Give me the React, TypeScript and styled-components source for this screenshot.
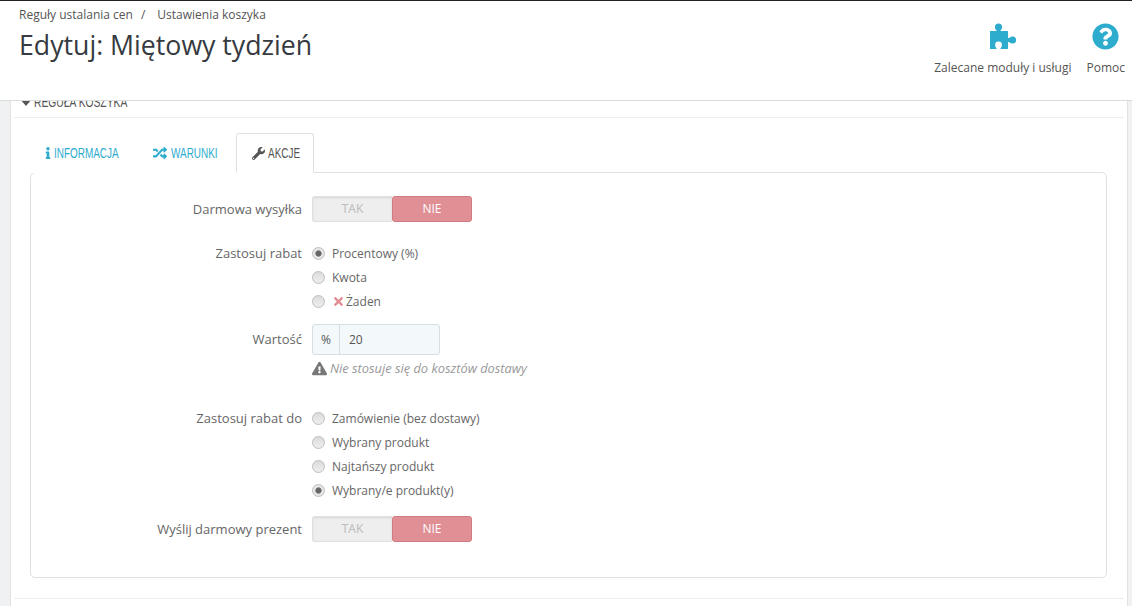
import React from "react";
import styled, { createGlobalStyle } from "styled-components";
import { FaExclamationTriangle, FaInfo, FaQuestionCircle, FaRandom, FaTimes, FaWrench } from "react-icons/fa";

const GlobalStyle = createGlobalStyle`
  html, body {
    margin: 0;
    padding: 0;
    height: 606px;
    overflow: hidden;
    background: #eff1f2;
    font-family: "Open Sans", sans-serif;
    color: #666;
  }
`;

const Page = styled.div`
  width: 1132px;
  height: 606px;
  overflow: hidden;
  display: flex;
  flex-direction: column;
`;

const Header = styled.header`
  position: relative;
  z-index: 2;
  flex: none;
  box-sizing: border-box;
  height: 101px;
  background: #fff;
  border-top: 1px solid #222;
  border-bottom: 1px solid #d9dcdd;
  display: flex;
  justify-content: space-between;
  padding: 0 7px 0 19px;
`;

const Breadcrumb = styled.div`
  margin-top: 6px;
  font-size: 12px;
  line-height: 16px;
  color: #555;
  white-space: nowrap;
`;

const Separator = styled.span`
  margin: 0 12px 0 8px;
`;

const Title = styled.h1`
  margin: 4px 0 0;
  font-size: 26.7px;
  font-weight: 400;
  line-height: 36px;
  color: #363a41;
`;

const Toolbar = styled.div`
  display: flex;
  gap: 15px;
  padding-top: 22px;
`;

const ToolButton = styled.div`
  display: flex;
  flex-direction: column;
  align-items: center;
  font-size: 12px;
  line-height: 16px;
  color: #555;
  svg {
    display: block;
    color: #2eacce;
    margin-bottom: 10px;
  }
`;

const Panel = styled.main`
  flex: 1;
  margin: -9px 4px 0 10px;
  background: #fff;
  border-left: 1px solid #e0e2e3;
  border-right: 1px solid #e0e2e3;
  padding: 0 20px 0 19px;
  display: flex;
  flex-direction: column;
`;

const PanelHeading = styled.div`
  height: 26px;
  margin: 0 -17px 0 -16px;
  padding: 0 0 8px 6px;
  box-sizing: border-box;
  display: flex;
  align-items: flex-end;
  gap: 2px;
  border-bottom: 1px solid #eee;
  font-size: 14.5px;
  line-height: 14px;
  color: #555;
  svg {
    flex: none;
    margin-bottom: 3px;
  }
`;

const NarrowText = styled.span`
  display: inline-block;
  font-family: "Liberation Sans", sans-serif;
  transform: scaleX(0.71);
  transform-origin: left center;
  white-space: nowrap;
`;

const Tabs = styled.div`
  display: flex;
  margin: 15px 0 -1px;
  padding-left: 1px;
  height: 40px;
  position: relative;
  z-index: 1;
`;

const Tab = styled.div<{ $active?: boolean; $width: number; $left: number; $gap: number }>`
  box-sizing: border-box;
  height: 40px;
  display: flex;
  align-items: center;
  gap: ${(p) => p.$gap}px;
  padding-left: ${(p) => p.$left}px;
  width: ${(p) => p.$width}px;
  font-size: 14px;
  color: ${(p) => (p.$active ? "#555" : "#2eacce")};
  background: #fff;
  border: 1px solid ${(p) => (p.$active ? "#dfe1e2" : "transparent")};
  border-bottom-color: ${(p) => (p.$active ? "#fff" : "transparent")};
  border-radius: 3px 3px 0 0;
  svg {
    flex: none;
  }
`;

const FormBox = styled.section`
  box-sizing: border-box;
  height: 406px;
  border: 1px solid #dfe1e2;
  border-radius: 5px;
  padding-top: 23px;
  display: flex;
  flex-direction: column;
`;

const Row = styled.div<{ $top?: number }>`
  display: grid;
  grid-template-columns: 271px 1fr;
  column-gap: 10px;
  margin-top: ${(p) => p.$top ?? 0}px;
`;

const Label = styled.label<{ $height: number }>`
  text-align: right;
  font-size: 13px;
  color: #666;
  line-height: ${(p) => p.$height}px;
  white-space: nowrap;
`;

const Switch = styled.div`
  display: flex;
  width: 160px;
  height: 26px;
  box-sizing: border-box;
  border-radius: 3px;
  font-size: 12px;
  line-height: 26px;
  text-align: center;
`;

const SwitchOff = styled.span`
  flex: 0 0 80px;
  box-sizing: border-box;
  background: #eee;
  color: #bbb;
  border: 1px solid #e0e0e0;
  border-right: 0;
  border-radius: 3px 0 0 3px;
  line-height: 24px;
  box-shadow: inset 0 1px 2px rgba(0, 0, 0, 0.1);
`;

const SwitchOn = styled.span`
  flex: 0 0 80px;
  box-sizing: border-box;
  background: #e08f95;
  color: #fff;
  border: 1px solid #d27c82;
  border-radius: 3px;
  line-height: 24px;
`;

const RadioRow = styled.div`
  display: flex;
  align-items: center;
  height: 24px;
  font-size: 12px;
  color: #666;
  gap: 7px;
`;

const RadioDot = styled.span<{ $checked?: boolean }>`
  width: 13px;
  height: 13px;
  box-sizing: border-box;
  border-radius: 50%;
  border: 1px solid #bdbdbd;
  background: ${(p) =>
    p.$checked
      ? "radial-gradient(circle, #666 0 2.6px, #e6e6e6 3.6px)"
      : "linear-gradient(#dcdcdc, #eee)"};
  flex: none;
`;

const RadioText = styled.span`
  display: inline-flex;
  align-items: center;
  svg {
    color: #e08f95;
    margin-right: 1px;
  }
`;

const InputGroup = styled.div`
  display: flex;
  width: 128px;
  height: 31px;
  box-sizing: border-box;
  background: #f3f9fb;
  border: 1px solid #d3dfe3;
  border-radius: 3px;
  font-size: 12px;
  line-height: 29px;
  color: #555;
`;

const Addon = styled.span`
  width: 27px;
  box-sizing: border-box;
  border-right: 1px solid #d3dfe3;
  text-align: center;
  font-size: 12px;
`;

const InputValue = styled.span`
  padding-left: 9px;
`;

const HelpText = styled.p`
  margin: 5px 0 0;
  display: flex;
  align-items: center;
  gap: 3px;
  font-size: 12.85px;
  line-height: 16px;
  font-style: italic;
  color: #999;
  svg {
    color: #777;
  }
`;

const Footer = styled.div`
  margin: 20px -17px 0 -16px;
  border-top: 1px solid #eee;
`;

const discountTypes: { text: string; checked?: boolean; cross?: boolean }[] = [
  { text: "Procentowy (%)", checked: true },
  { text: "Kwota" },
  { text: "Żaden", cross: true },
];

const discountTargets: { text: string; checked?: boolean }[] = [
  { text: "Zamówienie (bez dostawy)" },
  { text: "Wybrany produkt" },
  { text: "Najtańszy produkt" },
  { text: "Wybrany/e produkt(y)", checked: true },
];

function PuzzleIcon() {
  return (
    <svg width="28" height="27" viewBox="0 0 28 27" fill="currentColor">
      <circle cx="9.5" cy="4" r="3.6" />
      <rect x="7.5" y="6" width="4" height="4" />
      <rect x="1" y="8" width="18" height="18" />
      <rect x="17" y="15" width="6" height="4" />
      <circle cx="23.5" cy="17" r="3.6" />
      <circle cx="9.5" cy="22" r="3.4" fill="#fff" />
      <rect x="7.5" y="23" width="4" height="3" fill="#fff" />
    </svg>
  );
}

function CaretIcon() {
  return (
    <svg width="12" height="7" viewBox="0 0 12 7" fill="#555">
      <path d="M0 0h12L6 7z" />
    </svg>
  );
}

function YesNo() {
  return (
    <Switch>
      <SwitchOff>TAK</SwitchOff>
      <SwitchOn>NIE</SwitchOn>
    </Switch>
  );
}

export default function App() {
  return (
    <Page>
      <GlobalStyle />
      <Header>
        <div>
          <Breadcrumb>
            Reguły ustalania cen<Separator>/</Separator>Ustawienia koszyka
          </Breadcrumb>
          <Title>Edytuj: Miętowy tydzień</Title>
        </div>
        <Toolbar>
          <ToolButton>
            <PuzzleIcon />
            Zalecane moduły i usługi
          </ToolButton>
          <ToolButton>
            <FaQuestionCircle size={27} />
            Pomoc
          </ToolButton>
        </Toolbar>
      </Header>
      <Panel>
        <PanelHeading>
          <CaretIcon />
          <NarrowText>REGUŁA KOSZYKA</NarrowText>
        </PanelHeading>
        <Tabs>
          <Tab $width={106} $left={10} $gap={0}>
            <FaInfo size={12} />
            <NarrowText>INFORMACJA</NarrowText>
          </Tab>
          <Tab $width={99} $left={15} $gap={4}>
            <FaRandom size={14} />
            <NarrowText>WARUNKI</NarrowText>
          </Tab>
          <Tab $active $width={78} $left={15} $gap={3}>
            <FaWrench size={13} />
            <NarrowText>AKCJE</NarrowText>
          </Tab>
        </Tabs>
        <FormBox>
          <Row>
            <Label $height={26}>Darmowa wysyłka</Label>
            <YesNo />
          </Row>
          <Row $top={19}>
            <Label $height={24}>Zastosuj rabat</Label>
            <div>
              {discountTypes.map((r) => (
                <RadioRow key={r.text}>
                  <RadioDot $checked={r.checked} />
                  <RadioText>
                    {r.cross && <FaTimes size={13} />}
                    {r.text}
                  </RadioText>
                </RadioRow>
              ))}
            </div>
          </Row>
          <Row $top={11}>
            <Label $height={31}>Wartość</Label>
            <div>
              <InputGroup>
                <Addon>%</Addon>
                <InputValue>20</InputValue>
              </InputGroup>
              <HelpText>
                <FaExclamationTriangle size={15} />
                Nie stosuje się do kosztów dostawy
              </HelpText>
            </div>
          </Row>
          <Row $top={30}>
            <Label $height={24}>Zastosuj rabat do</Label>
            <div>
              {discountTargets.map((r) => (
                <RadioRow key={r.text}>
                  <RadioDot $checked={r.checked} />
                  <RadioText>{r.text}</RadioText>
                </RadioRow>
              ))}
            </div>
          </Row>
          <Row $top={14}>
            <Label $height={26}>Wyślij darmowy prezent</Label>
            <YesNo />
          </Row>
        </FormBox>
        <Footer />
      </Panel>
    </Page>
  );
}
